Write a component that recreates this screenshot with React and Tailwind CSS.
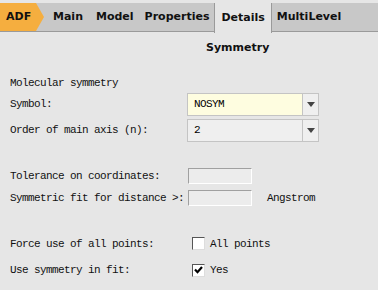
import React from 'react';

const mono = { fontFamily: '"Liberation Mono", "DejaVu Sans Mono", monospace' };

function Arrow() {
  return (
    <svg width="8" height="5" viewBox="0 0 8 5">
      <path d="M0 0 L8 0 L4 5 Z" fill="#444" />
    </svg>
  );
}

function Dropdown({ value, bg }) {
  return (
    <div className={`flex h-[23px] w-[132px] border border-[#c4c4c4] ${bg}`}>
      <div className="flex-1 flex items-center pl-[6px] text-[11px] tracking-[-0.6px] text-black">{value}</div>
      <div className="w-[16px] flex items-center justify-center border-l border-[#c4c4c4] bg-[#efefef]">
        <Arrow />
      </div>
    </div>
  );
}

function Field() {
  return <div className="h-[16px] w-[64px] border border-t-[#a0a0a0] border-l-[#a0a0a0] border-b-white border-r-white bg-[#ececec]" />;
}

function Check({ checked }) {
  return (
    <div className="w-[13px] h-[13px] border border-t-[#555] border-l-[#555] border-b-[#ddd] border-r-[#ddd] bg-white flex items-center justify-center">
      {checked && (
        <svg width="9" height="8" viewBox="0 0 9 8">
          <path d="M1 3.5 L3.5 6.2 L8 1" stroke="#000" strokeWidth="2.2" fill="none" />
        </svg>
      )}
    </div>
  );
}

export default function App() {
  return (
    <div className="w-[378px] h-[290px] bg-[#e6e6e6] overflow-hidden">
      {/* tab bar */}
      <div className="pt-[3px]">
        <div className="flex h-[29px] bg-[#c8c8c8] border-b border-[#9a9a9a] text-[11px] font-bold text-[#111]" style={{ fontFamily: '"DejaVu Sans", Verdana, sans-serif' }}>
          <div className="relative flex items-center pl-[6px] w-[44px] bg-[#f5ae3f]" style={{ clipPath: 'polygon(0 0, 36px 0, 44px 50%, 36px 100%, 0 100%)' }}>
            ADF
          </div>
          <div className="flex items-center pl-[9px]">
            <span>Main</span>
            <span className="ml-[13px]">Model</span>
            <span className="ml-[11px]">Properties</span>
          </div>
          <div className="flex items-center ml-[5px] px-[6px] h-[30px] bg-[#e6e6e6] border-l border-r border-[#9a9a9a]">Details</div>
          <div className="flex items-center pl-[5px]">MultiLevel</div>
        </div>
      </div>

      <div className="pl-[206px] pt-[8px] text-[11px] font-bold text-[#111]" style={{ fontFamily: '"DejaVu Sans", Verdana, sans-serif' }}>
        Symmetry
      </div>

      <div className="pl-[10px] text-[11px] tracking-[-0.6px] text-[#111]" style={mono}>
        <div className="mt-[20px] h-[14px] flex items-center">Molecular symmetry</div>

        <div className="mt-[2px] flex flex-col gap-[3px]">
          <div className="flex items-center">
            <span className="w-[177px]">Symbol:</span>
            <Dropdown value="NOSYM" bg="bg-[#fefde0]" />
          </div>
          <div className="flex items-center">
            <span className="w-[177px]">Order of main axis (n):</span>
            <Dropdown value="2" bg="bg-[#efefef]" />
          </div>
        </div>

        <div className="mt-[26px] flex flex-col gap-[6px]">
          <div className="flex items-center">
            <span className="w-[178px]">Tolerance on coordinates:</span>
            <Field />
          </div>
          <div className="flex items-center">
            <span className="w-[178px]">Symmetric fit for distance &gt;:</span>
            <Field />
            <span className="ml-[15px]">Angstrom</span>
          </div>
        </div>

        <div className="mt-[29px] flex flex-col gap-[10px]">
          <div className="flex items-center">
            <span className="w-[182px]">Force use of all points:</span>
            <Check />
            <span className="ml-[5px]">All points</span>
          </div>
          <div className="flex items-center">
            <span className="w-[182px]">Use symmetry in fit:</span>
            <Check checked />
            <span className="ml-[5px]">Yes</span>
          </div>
        </div>
      </div>
    </div>
  );
}
